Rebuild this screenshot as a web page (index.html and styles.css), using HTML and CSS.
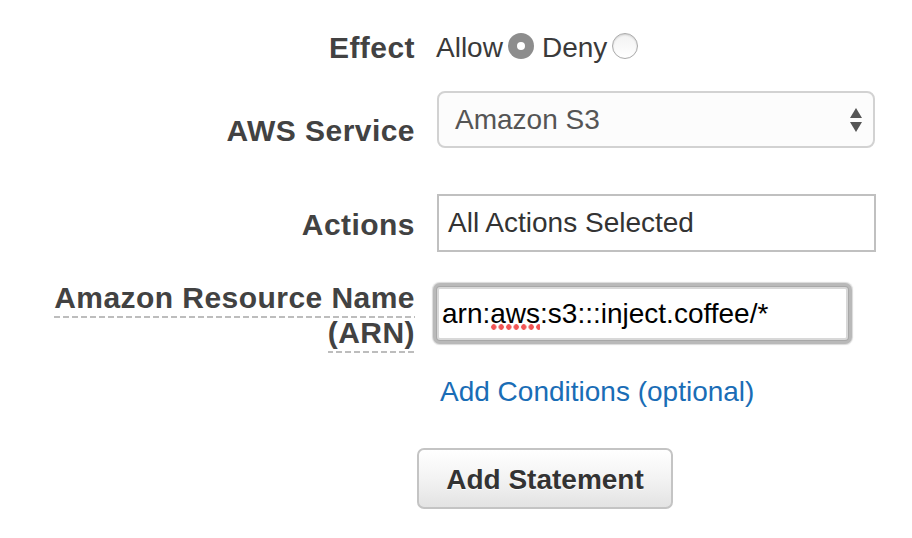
FILE: index.html
```html
<!DOCTYPE html>
<html>
<head>
<meta charset="utf-8">
<title>Policy Generator</title>
<link rel="stylesheet" href="styles.css">
</head>
<body>
<form class="form">
  <div class="row row-effect">
    <div class="label">Effect</div>
    <div class="control radios">
      <span class="opt">Allow</span><span class="radio radio-on"></span>
      <span class="opt opt-deny">Deny</span><span class="radio"></span>
    </div>
  </div>

  <div class="row row-service">
    <div class="label label-service">AWS Service</div>
    <div class="control">
      <div class="select">
        <span class="select-text">Amazon S3</span>
        <span class="arrows"><span class="up"></span><span class="down"></span></span>
      </div>
    </div>
  </div>

  <div class="row row-actions">
    <div class="label label-actions">Actions</div>
    <div class="control">
      <div class="box">All Actions Selected</div>
    </div>
  </div>

  <div class="row row-arn">
    <div class="label label-arn"><span class="dotted">Amazon Resource Name (ARN)</span></div>
    <div class="control">
      <div class="input-focus">arn:<span class="misspelled">aws</span>:s3:::inject.coffee/*</div>
    </div>
  </div>

  <div class="row row-link">
    <div class="label"></div>
    <div class="control">
      <a class="link" href="#">Add Conditions (optional)</a>
    </div>
  </div>

  <div class="actions-bar">
    <button type="button" class="btn">Add Statement</button>
  </div>
</form>
</body>
</html>
```

FILE: styles.css
```css
html, body {
  margin: 0;
  padding: 0;
  background: #ffffff;
}

body {
  font-family: "Liberation Sans", Arial, Helvetica, sans-serif;
  color: #333333;
  width: 912px;
  height: 538px;
  overflow: hidden;
}

.form {
  padding-top: 30px;
}

.row {
  display: flex;
  align-items: flex-start;
  gap: 22px;
}

.label {
  flex: none;
  width: 415px;
  text-align: right;
  font-weight: bold;
  font-size: 30px;
  line-height: 34px;
  letter-spacing: 0.45px;
  color: #424242;
}

.control {
  flex: none;
  width: 440px;
}

/* Row 1: Effect */
.row-effect .label {
  line-height: 36px;
}

.radios {
  display: flex;
  align-items: center;
  height: 36px;
  font-size: 28px;
  line-height: 36px;
  color: #3a3a3a;
  margin-left: -1px;
}

.opt-deny {
  margin-left: 8px;
}

.radio {
  flex: none;
  box-sizing: border-box;
  width: 26px;
  height: 26px;
  border-radius: 50%;
  margin-left: 5px;
  margin-bottom: 5px;
  border: 1px solid #aaaaaa;
  background: linear-gradient(#f2f2f2, #ffffff);
  box-shadow: inset 0 1px 2px rgba(0, 0, 0, 0.15);
  position: relative;
}

.radio-on {
  border: none;
  background: #8d8d8d;
  box-shadow: none;
}

.radio-on::after {
  content: "";
  position: absolute;
  left: 9px;
  top: 9px;
  width: 8px;
  height: 8px;
  border-radius: 50%;
  background: #ffffff;
}

/* Row 2: AWS Service */
.row-service {
  margin-top: 25px;
}

.label-service {
  padding-top: 23px;
}

.select {
  box-sizing: border-box;
  width: 438px;
  height: 57px;
  border: 2px solid #d2d2d2;
  border-radius: 8px;
  background: #fcfcfc;
  display: flex;
  align-items: center;
  justify-content: space-between;
  padding: 0 11px 0 16px;
  font-size: 28px;
  color: #555555;
}

.arrows {
  display: flex;
  flex-direction: column;
  gap: 4px;
}

.up, .down {
  width: 0;
  height: 0;
  border-left: 6.5px solid transparent;
  border-right: 6.5px solid transparent;
}

.up {
  border-bottom: 10px solid #555555;
}

.down {
  border-top: 10px solid #555555;
}

/* Row 3: Actions */
.row-actions {
  margin-top: 46px;
}

.label-actions {
  padding-top: 14px;
}

.box {
  box-sizing: border-box;
  width: 439px;
  height: 58px;
  border: 2px solid #c0c0c0;
  display: flex;
  align-items: center;
  padding-left: 9px;
  font-size: 28px;
  color: #333333;
}

/* Row 4: ARN */
.row-arn {
  margin-top: 28px;
}

.label-arn {
  line-height: 35px;
}

.dotted {
  padding-bottom: 4px;
  background-image: linear-gradient(90deg, #bdbdbd 0, #bdbdbd 6px, transparent 6px, transparent 9px);
  background-size: 9px 2px;
  background-repeat: repeat-x;
  background-position: 0 100%;
}

.input-focus {
  box-sizing: border-box;
  margin-top: 7px;
  width: 411px;
  height: 53px;
  border: 2px solid #d8d8d8;
  border-radius: 3px;
  box-shadow: 0 0 0 1px #a8a8a8, 0 0 0 4px #b9b9b9, 0 0 1px 5px rgba(150, 150, 150, 0.35);
  background: #ffffff;
  padding-left: 3px;
  font-size: 28px;
  line-height: 49px;
  color: #000000;
  white-space: nowrap;
}

.misspelled {
  padding-bottom: 2px;
  background-image: radial-gradient(circle at 3.75px 2.75px, #f25555 0, #f25555 2.3px, rgba(242, 85, 85, 0) 2.9px);
  background-size: 7.5px 5.5px;
  background-repeat: repeat-x;
  background-position: 0 calc(100% - 2px);
}

/* Row 5: link */
.row-link {
  margin-top: 26px;
}

.link {
  display: inline-block;
  margin-left: 3px;
  font-size: 28px;
  line-height: 32px;
  color: #1a6db6;
  text-decoration: none;
}

/* Row 6: button */
.actions-bar {
  margin-top: 40px;
  padding-left: 417px;
}

.btn {
  box-sizing: border-box;
  width: 256px;
  height: 61px;
  border: 2px solid #c4c4c4;
  border-radius: 7px;
  background: linear-gradient(#ffffff, #f3f3f3 50%, #e3e3e3);
  font-family: "Liberation Sans", Arial, Helvetica, sans-serif;
  font-weight: bold;
  font-size: 28px;
  color: #333333;
  text-shadow: 0 1px 0 #ffffff;
  padding: 2px 0 0 0;
  cursor: pointer;
}
```
